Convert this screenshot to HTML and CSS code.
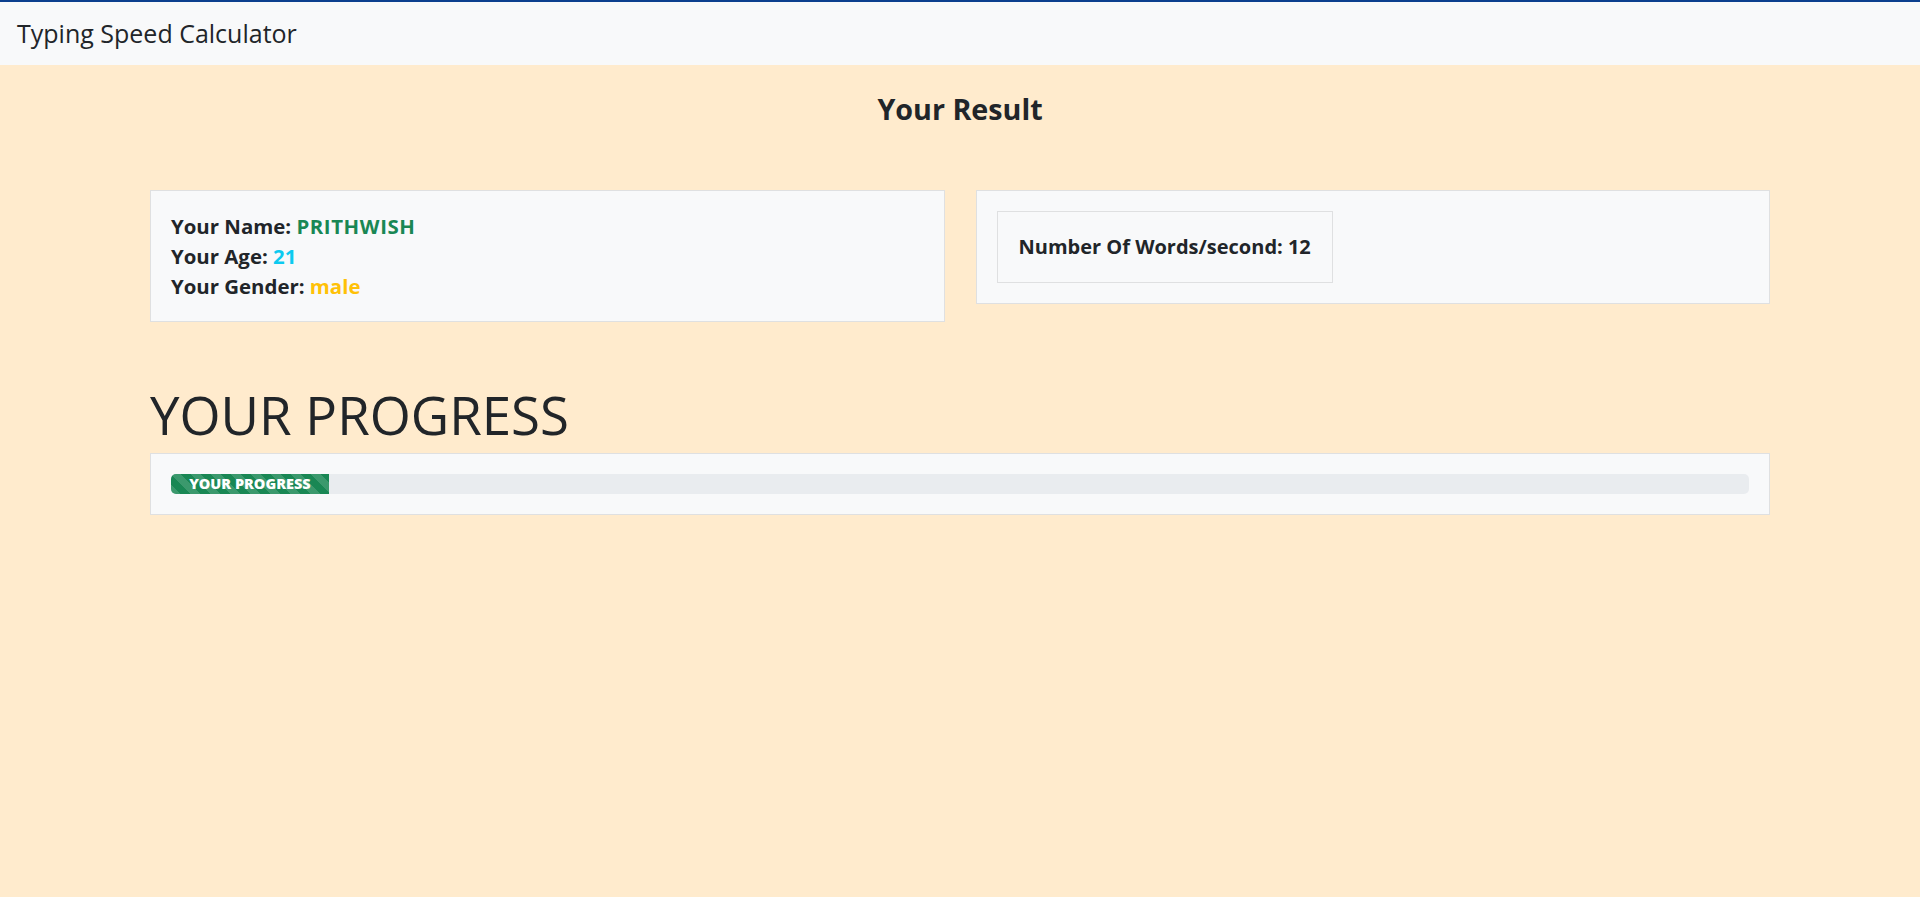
FILE: index.html
```html
<!DOCTYPE html>
<html lang="en">
<head>
<meta charset="utf-8">
<title>Typing Speed Calculator</title>
<link rel="stylesheet" href="styles.css">
</head>
<body>
<nav class="navbar">
  <span class="brand">Typing Speed Calculator</span>
</nav>
<main class="page">
  <h2 class="result-title">Your Result</h2>
  <div class="cards">
    <div class="card">
      <div class="card-body">
        <div class="line">Your Name: <span class="green caps">PRITHWISH</span></div>
        <div class="line">Your Age: <span class="cyan">21</span></div>
        <div class="line">Your Gender: <span class="yellow">male</span></div>
      </div>
    </div>
    <div class="card">
      <div class="card-body">
        <div class="inner-card">
          <div class="line">Number Of Words/second: 12</div>
        </div>
      </div>
    </div>
  </div>
  <h1 class="progress-title">YOUR PROGRESS</h1>
  <div class="card">
    <div class="card-body">
      <div class="progress">
        <div class="progress-bar" style="width: 10%">YOUR PROGRESS</div>
      </div>
    </div>
  </div>
</main>
</body>
</html>
```
FILE: styles.css
```css
* { box-sizing: border-box; }
html, body { margin: 0; padding: 0; }
body {
  background: #ffebcd;
  color: #212529;
  font-family: "Comic Sans MS", "Open Sans", sans-serif;
  font-size: 20px;
  line-height: 1.5;
  min-height: 897px;
}
.navbar {
  background: #f8f9fa;
  border-top: 2px solid #0b3f8e;
  height: 65px;
  display: flex;
  align-items: center;
  padding: 0 17px;
}
.brand {
  font-size: 25px;
  line-height: 1;
  color: #212529;
}
.page {
  width: 1620px;
  margin: 0 auto;
}
.result-title {
  margin: 26px 0 63px;
  font-size: 28.7px;
  line-height: 36px;
  font-weight: 700;
  text-align: center;
}
.cards {
  display: grid;
  grid-template-columns: 1fr 1fr;
  column-gap: 31px;
  align-items: start;
}
.card {
  background: #f8f9fa;
  border: 1px solid #dfe0e1;
}
.card-body {
  padding: 20px;
}
.line {
  font-weight: 700;
  font-size: 20.4px;
  line-height: 30px;
}
.caps { letter-spacing: 0.6px; }
.green { color: #198754; }
.cyan { color: #0dcaf0; }
.yellow { color: #ffc107; }
.inner-card {
  display: inline-block;
  border: 1px solid #dfe0e1;
  padding: 20px 21px;
}
.inner-card .line { font-size: 20px; }
.progress-title {
  margin: 63px 0 8px;
  font-size: 52.8px;
  line-height: 60px;
  font-weight: 400;
}
.progress {
  height: 20px;
  background: #e9ecef;
  border-radius: 5px;
  overflow: hidden;
  display: flex;
}
.progress-bar {
  background-color: #198754;
  background-image: linear-gradient(45deg, rgba(255,255,255,.15) 25%, transparent 25%, transparent 50%, rgba(255,255,255,.15) 50%, rgba(255,255,255,.15) 75%, transparent 75%, transparent);
  background-size: 20px 20px;
  color: #fff;
  font-size: 14.5px;
  font-weight: 800;
  line-height: 20px;
  text-align: center;
  white-space: nowrap;
  display: flex;
  align-items: center;
  justify-content: center;
}
```
